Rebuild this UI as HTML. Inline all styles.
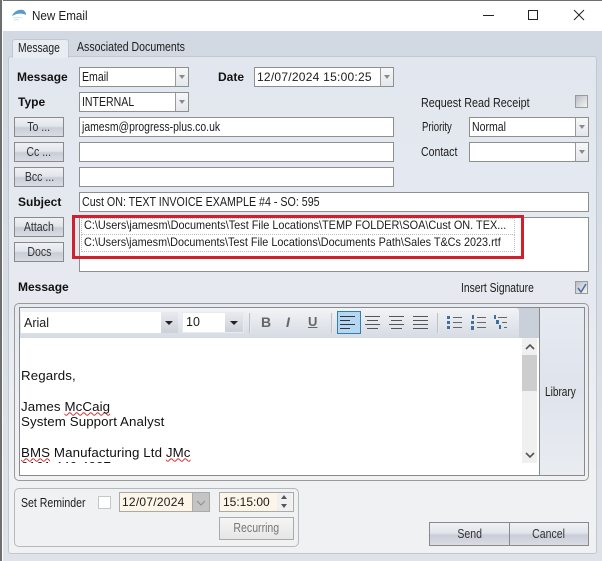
<!DOCTYPE html>
<html><head><meta charset="utf-8"><style>
html,body{margin:0;padding:0}
body{width:602px;height:561px;overflow:hidden;position:relative;background:linear-gradient(#d1d8e2,#dfe3e9);font:12px "Liberation Sans",sans-serif;color:#1c1c1c}
div,span.a,svg{position:absolute;box-sizing:border-box}
.t{white-space:nowrap;line-height:14px}
.s{display:inline-block;font-size:12.6px;transform:scaleX(.838);transform-origin:0 50%}
.btn .s,.c .s{transform-origin:50% 50%}
.b{font-weight:bold;color:#111}
.i{background:#fff;border:1px solid #8f8f8f;height:20px;line-height:18px;padding-left:2px;white-space:nowrap}
.arr{right:0;top:0;bottom:0;width:13px;border-left:1px solid #9a9a9a;background:linear-gradient(#f6f7f9,#e4e7ec)}
.arr:after{content:"";position:absolute;left:3px;top:7px;border:3px solid transparent;border-top:4px solid #8a8a8a}
.btn{border:1px solid #8a8a8a;text-align:center;background:linear-gradient(#eff1f5 0,#e2e5eb 45%,#c9cdd7 55%,#d9dce3 100%);white-space:nowrap;color:#333}
.chk{border:1px solid #9a9a9a;background:linear-gradient(135deg,#b9bcc2,#f3f4f6);width:13px;height:13px}
.dot{border:1px dotted #bdbdbd}
.sq{text-decoration:underline wavy #c33 1px;text-underline-offset:1px;text-decoration-skip-ink:none}
</style></head><body>
<div style="left:0;top:0;width:602px;height:31px;background:#fff"></div>
<div style="left:0;top:0;width:602px;height:1px;background:#6e6e6e"></div>
<div style="left:0;top:0;width:2px;height:561px;background:#6e6e6e"></div>
<div style="left:2px;top:0;width:1px;height:561px;background:#fff"></div>
<svg style="left:11px;top:8px" width="16" height="14" viewBox="0 0 16 14"><path d="M1 8C3 3 8 1 12 2c2 1 3 3 3 5-4-2-9-2-14 1z" fill="#5c9cc4"/><path d="M2 10c3-1 6-1 9 0M3 12c2-.5 3-.5 5 0" stroke="#cfe3ef" fill="none"/></svg>
<div class="t" style="left:32px;top:9px;font-size:12.5px"><span class="s" style="font-size:inherit;transform:scaleX(.93)">New Email</span></div>
<div style="left:483px;top:15px;width:11px;height:1px;background:#222"></div>
<div style="left:528px;top:10px;width:10px;height:10px;border:1px solid #222"></div>
<svg style="left:573px;top:9px" width="12" height="12" viewBox="0 0 12 12"><path d="M1 1l10 10M11 1L1 11" stroke="#222" fill="none"/></svg>

<!-- tabs -->
<div style="left:8px;top:56px;width:589px;height:498px;background:linear-gradient(#e2e7ef,#e6eaf0 50%,#f0f1f3 85%);border:1px solid #c3c8d0;border-radius:3px"></div>
<div style="left:12px;top:39px;width:57px;height:19px;background:#e8ecf3;border:1px solid #c3c8d0;border-bottom:0;border-radius:3px 3px 0 0"></div>
<div class="t" style="left:18px;top:41px"><span class="s" style="transform:scaleX(.819)">Message</span></div>
<div class="t" style="left:77px;top:40px"><span class="s">Associated Documents</span></div>

<!-- row labels -->
<div class="t b" style="left:17px;top:70px">Message</div>
<div class="t b" style="left:218px;top:70px">Date</div>
<div class="t b" style="left:18px;top:95px">Type</div>
<div class="t b" style="left:18px;top:195px">Subject</div>
<div class="t b" style="left:18px;top:280px">Message</div>

<div class="i" style="left:79px;top:67px;width:110px"><span class="s">Email</span><div class="arr"></div></div>
<div class="i" style="left:79px;top:92px;width:110px"><span class="s">INTERNAL</span><div class="arr"></div></div>
<div class="i" style="left:254px;top:67px;width:140px;letter-spacing:.25px">12/07/2024 15:00:25<div class="arr"></div></div>

<div class="btn" style="left:14px;top:117px;width:50px;height:20px;line-height:18px"><span class="s">To ...</span></div>
<div class="btn" style="left:14px;top:142px;width:50px;height:20px;line-height:18px"><span class="s">Cc ...</span></div>
<div class="btn" style="left:14px;top:167px;width:50px;height:20px;line-height:18px"><span class="s">Bcc ...</span></div>
<div class="i" style="left:79px;top:117px;width:315px"><span class="s" style="transform:scaleX(.828)">jamesm@progress-plus.co.uk</span></div>
<div class="i" style="left:79px;top:142px;width:315px"></div>
<div class="i" style="left:79px;top:167px;width:315px"></div>

<div class="t" style="left:421px;top:96px"><span class="s" style="transform:scaleX(.857)">Request Read Receipt</span></div>
<div class="chk" style="left:575px;top:95px"></div>
<div class="t" style="left:422px;top:120px"><span class="s" style="transform:scaleX(.762)">Priority</span></div>
<div class="t" style="left:421px;top:145px"><span class="s">Contact</span></div>
<div class="i" style="left:469px;top:117px;width:120px"><span class="s">Normal</span><div class="arr"></div></div>
<div class="i" style="left:469px;top:142px;width:120px"><div class="arr"></div></div>

<div class="i" style="left:79px;top:192px;width:510px"><span class="s" style="transform:scaleX(.848)">Cust ON: TEXT INVOICE EXAMPLE #4 - SO: 595</span></div>

<div class="btn" style="left:14px;top:217px;width:50px;height:20px;line-height:18px"><span class="s">Attach</span></div>
<div class="btn" style="left:14px;top:242px;width:50px;height:20px;line-height:18px"><span class="s">Docs</span></div>
<div class="i" style="left:79px;top:217px;width:510px;height:55px"></div>
<div class="dot" style="left:81px;top:218px;width:434px;height:17px"></div>
<div class="dot" style="left:81px;top:234px;width:434px;height:18px"></div>
<div class="t" style="left:84px;top:219px;font-size:11.6px"><span class="s" style="font-size:inherit;transform:scaleX(.94)">C:\Users\jamesm\Documents\Test File Locations\TEMP FOLDER\SOA\Cust ON. TEX...</span></div>
<div class="t" style="left:84px;top:236px;font-size:11.6px"><span class="s" style="font-size:inherit;transform:scaleX(.935)">C:\Users\jamesm\Documents\Test File Locations\Documents Path\Sales T&amp;Cs 2023.rtf</span></div>
<div style="left:72px;top:215px;width:452px;height:44px;border:3px solid #d0202e"></div>

<div class="t" style="left:461px;top:281px"><span class="s" style="transform:scaleX(.819)">Insert Signature</span></div>
<div class="chk" style="left:575px;top:281px"></div>
<svg style="left:576px;top:282px" width="12" height="12" viewBox="0 0 12 12"><path d="M2 6l3 4 5-8" stroke="#4f6f9f" stroke-width="1.6" fill="none"/></svg>

<!-- editor -->
<div style="left:14px;top:303px;width:575px;height:178px;border:1px solid #9a9a9a;border-radius:5px"></div>
<div style="left:19px;top:307px;width:566px;height:169px;border:1px solid #8a8a8a;background:#fff"></div>
<div style="left:20px;top:308px;width:520px;height:30px;background:#c9d0da"></div>
<div style="left:20px;top:308px;width:499px;height:30px;background:linear-gradient(#f2f4f7,#d6dae2);border-radius:0 3px 0 0"></div>
<div style="left:539px;top:308px;width:45px;height:167px;border-left:1px solid #8a8a8a;background:linear-gradient(#e6eaf1,#dfe4ec 50%,#e9ecf1)"></div>
<div class="t" style="left:545px;top:385px"><span class="s" style="transform:scaleX(.80)">Library</span></div>

<div style="left:21px;top:312px;width:140px;height:21px;background:#fff"></div>
<div style="left:161px;top:312px;width:17px;height:21px;background:linear-gradient(#e8eaef,#ccd0d8)"></div>
<div style="left:165px;top:321px;border:4px solid transparent;border-top:4px solid #222"></div>
<div class="t" style="left:24px;top:316px;font-size:12.5px">Arial</div>
<div style="left:182px;top:312px;width:62px;height:21px;background:#fff;border:1px solid #e8eaef"></div>
<div style="left:225px;top:313px;width:18px;height:19px;background:linear-gradient(#e8eaef,#ccd0d8)"></div>
<div style="left:230px;top:321px;border:4px solid transparent;border-top:4px solid #222"></div>
<div class="t" style="left:186px;top:315px;font-size:12.5px">10</div>
<div style="left:249px;top:313px;width:2px;height:20px;background:linear-gradient(90deg,#a8adb6,#fff)"></div>
<div class="t" style="left:261px;top:315px;font-size:14px;font-weight:bold;color:#666">B</div>
<div class="t" style="left:286px;top:315px;font-size:14px;font-weight:bold;font-style:italic;color:#666">I</div>
<div class="t" style="left:308px;top:315px;font-size:13px;font-weight:bold;color:#666;text-decoration:underline">U</div>
<div style="left:331px;top:313px;width:2px;height:20px;background:linear-gradient(90deg,#a8adb6,#fff)"></div>
<div style="left:337px;top:311px;width:24px;height:23px;background:#b5d7f2;border:1px solid #2f7fb5"></div>
<svg style="left:340px;top:316px" width="90" height="14" viewBox="0 0 90 14" fill="none" stroke="#555"><path stroke="#333" d="M0 .5h15M0 4.5h10M0 8.5h15M0 12.5h10"/><path d="M25 .5h15M27 4.5h11M25 8.5h15M27 12.5h11"/><path d="M49 .5h15M51 4.5h11M49 8.5h15M51 12.5h11"/><path d="M73 .5h15M73 4.5h15M73 8.5h15M73 12.5h15"/></svg>
<div style="left:437px;top:313px;width:2px;height:20px;background:linear-gradient(90deg,#a8adb6,#fff)"></div>
<svg style="left:446px;top:315px" width="66" height="16" viewBox="0 0 66 16"><g fill="#3f6f9f"><rect x="1" y="1" width="3" height="3"/><rect x="1" y="6" width="3" height="3"/><rect x="1" y="11" width="3" height="3"/><rect x="26" y="0" width="2" height="4"/><rect x="25" y="6" width="3" height="3"/><rect x="25" y="11" width="3" height="4"/><rect x="48" y="0" width="2" height="4"/><rect x="50" y="5" width="3" height="4"/><rect x="53" y="10" width="2" height="4"/></g><path d="M7 2.500h9M7 7.500h9M7 12.500h9M31 2.500h9M31 7.500h9M31 12.500h9M52 2.500h9M56 7.500h5M58 12.500h3" stroke="#666" fill="none"/></svg>

<!-- body text -->
<div style="left:20px;top:338px;width:502px;height:125px;overflow:hidden;background:#fff"><div class="t" style="left:1px;top:30px;font-size:13.3px;line-height:15.33px;color:#111;letter-spacing:.1px">Regards,<br><br>James <span class="sq">McCaig</span><br>System Support Analyst<br><br><span class="sq">BMS</span> Manufacturing Ltd <span class="sq">JMc</span></div><div class="t" style="left:1px;top:121px;font-size:13.3px;line-height:15px;color:#111;letter-spacing:.1px">0161 440 4007</div></div>
<div style="left:522px;top:338px;width:15px;height:125px;background:#f0f0f0"></div>
<div style="left:522px;top:355px;width:15px;height:36px;background:#cdcdcd"></div>
<svg style="left:525px;top:343px" width="10" height="8" viewBox="0 0 10 8"><path d="M1 6l4-4 4 4" stroke="#555" stroke-width="1.6" fill="none"/></svg>
<svg style="left:525px;top:451px" width="10" height="8" viewBox="0 0 10 8"><path d="M1 2l4 4 4-4" stroke="#555" stroke-width="1.6" fill="none"/></svg>

<!-- reminder -->
<div style="left:14px;top:488px;width:285px;height:59px;border:1px solid #b5b8bd;border-radius:5px"></div>
<div class="t" style="left:21px;top:496px"><span class="s">Set Reminder</span></div>
<div style="left:98px;top:496px;width:13px;height:13px;background:#fff;border:1px solid #c4c6ca"></div>
<div style="left:119px;top:492px;width:91px;height:20px;background:#fdf5e8;border:1px solid #aaa;line-height:18px;padding-left:2px;letter-spacing:.25px">12/07/2024</div>
<div style="left:192px;top:492px;width:18px;height:20px;background:#c4c4c4;border:1px solid #aaa"></div>
<svg style="left:195px;top:499px" width="12" height="8" viewBox="0 0 12 8"><path d="M2 2l4 4 4-4" stroke="#8e8e8e" fill="none"/></svg>
<div style="left:219px;top:492px;width:75px;height:20px;background:#fdf5e8;border:1px solid #aaa;line-height:18px;padding-left:3px;letter-spacing:0">15:15:00</div>
<div style="left:277px;top:493px;width:15px;height:18px;background:#f0f0f0"></div>
<div style="left:281px;top:495px;border:3px solid transparent;border-bottom:4px solid #555;border-top:0"></div>
<div style="left:281px;top:504px;border:3px solid transparent;border-top:4px solid #555;border-bottom:0"></div>
<div class="c" style="left:219px;top:517px;width:75px;height:23px;border:1px solid #aaa;background:linear-gradient(#f5f5f5,#e6e6e6);text-align:center;line-height:21px;color:#777"><span class="s">Recurring</span></div>

<div class="btn" style="left:429px;top:522px;width:81px;height:24px;line-height:22px"><span class="s">Send</span></div>
<div class="btn" style="left:509px;top:522px;width:80px;height:24px;line-height:22px"><span class="s">Cancel</span></div>
</body></html>
